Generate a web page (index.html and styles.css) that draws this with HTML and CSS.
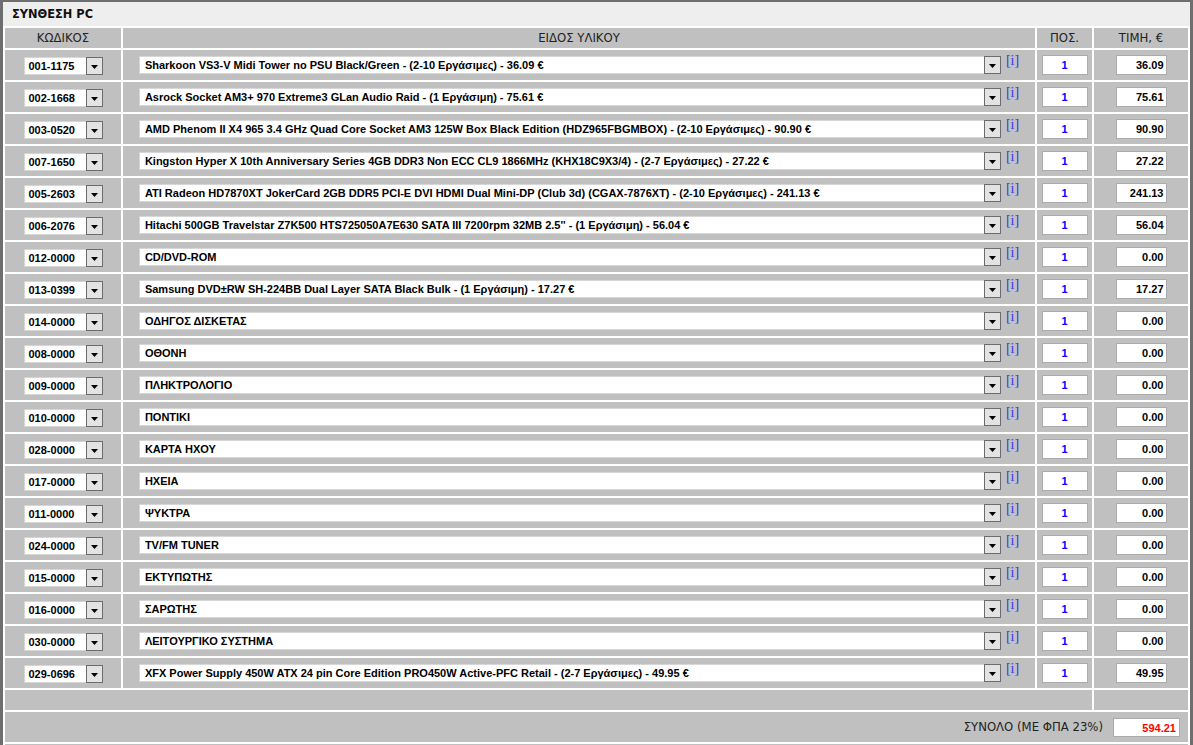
FILE: index.html
```html
<!DOCTYPE html>
<html>
<head>
<meta charset="utf-8">
<link rel="stylesheet" href="styles.css">
</head>
<body>
<div class="box">
  <div class="title">ΣΥΝΘΕΣΗ PC</div>
  <table class="grid">
    <thead>
      <tr class="head">
        <th class="c1">ΚΩΔΙΚΟΣ</th>
        <th class="c2">ΕΙΔΟΣ ΥΛΙΚΟΥ</th>
        <th class="c3">ΠΟΣ.</th>
        <th class="c4">ΤΙΜΗ, €</th>
      </tr>
    </thead>
    <tbody id="rows">
      <tr><td><div class="sel code"><span class="val">001-1175</span><span class="btn"><svg width="7" height="4" viewBox="0 0 7 4"><polygon points="0,0 7,0 3.5,4" fill="#000"/></svg></span></div></td><td><div class="item"><div class="sel desc"><span class="val">Sharkoon VS3-V Midi Tower no PSU Black/Green - (2-10 Εργάσιμες) - 36.09 €</span><span class="btn"><svg width="7" height="4" viewBox="0 0 7 4"><polygon points="0,0 7,0 3.5,4" fill="#000"/></svg></span></div><a class="info">[i]</a></div></td><td><div class="inp qty">1</div></td><td><div class="inp price">36.09</div></td></tr>
      <tr><td><div class="sel code"><span class="val">002-1668</span><span class="btn"><svg width="7" height="4" viewBox="0 0 7 4"><polygon points="0,0 7,0 3.5,4" fill="#000"/></svg></span></div></td><td><div class="item"><div class="sel desc"><span class="val">Asrock Socket AM3+ 970 Extreme3 GLan Audio Raid - (1 Εργάσιμη) - 75.61 €</span><span class="btn"><svg width="7" height="4" viewBox="0 0 7 4"><polygon points="0,0 7,0 3.5,4" fill="#000"/></svg></span></div><a class="info">[i]</a></div></td><td><div class="inp qty">1</div></td><td><div class="inp price">75.61</div></td></tr>
      <tr><td><div class="sel code"><span class="val">003-0520</span><span class="btn"><svg width="7" height="4" viewBox="0 0 7 4"><polygon points="0,0 7,0 3.5,4" fill="#000"/></svg></span></div></td><td><div class="item"><div class="sel desc"><span class="val">AMD Phenom II X4 965 3.4 GHz Quad Core Socket AM3 125W Box Black Edition (HDZ965FBGMBOX) - (2-10 Εργάσιμες) - 90.90 €</span><span class="btn"><svg width="7" height="4" viewBox="0 0 7 4"><polygon points="0,0 7,0 3.5,4" fill="#000"/></svg></span></div><a class="info">[i]</a></div></td><td><div class="inp qty">1</div></td><td><div class="inp price">90.90</div></td></tr>
      <tr><td><div class="sel code"><span class="val">007-1650</span><span class="btn"><svg width="7" height="4" viewBox="0 0 7 4"><polygon points="0,0 7,0 3.5,4" fill="#000"/></svg></span></div></td><td><div class="item"><div class="sel desc"><span class="val">Kingston Hyper X 10th Anniversary Series 4GB DDR3 Non ECC CL9 1866MHz (KHX18C9X3/4) - (2-7 Εργάσιμες) - 27.22 €</span><span class="btn"><svg width="7" height="4" viewBox="0 0 7 4"><polygon points="0,0 7,0 3.5,4" fill="#000"/></svg></span></div><a class="info">[i]</a></div></td><td><div class="inp qty">1</div></td><td><div class="inp price">27.22</div></td></tr>
      <tr><td><div class="sel code"><span class="val">005-2603</span><span class="btn"><svg width="7" height="4" viewBox="0 0 7 4"><polygon points="0,0 7,0 3.5,4" fill="#000"/></svg></span></div></td><td><div class="item"><div class="sel desc"><span class="val">ATI Radeon HD7870XT JokerCard 2GB DDR5 PCI-E DVI HDMI Dual Mini-DP (Club 3d) (CGAX-7876XT) - (2-10 Εργάσιμες) - 241.13 €</span><span class="btn"><svg width="7" height="4" viewBox="0 0 7 4"><polygon points="0,0 7,0 3.5,4" fill="#000"/></svg></span></div><a class="info">[i]</a></div></td><td><div class="inp qty">1</div></td><td><div class="inp price">241.13</div></td></tr>
      <tr><td><div class="sel code"><span class="val">006-2076</span><span class="btn"><svg width="7" height="4" viewBox="0 0 7 4"><polygon points="0,0 7,0 3.5,4" fill="#000"/></svg></span></div></td><td><div class="item"><div class="sel desc"><span class="val">Hitachi 500GB Travelstar Z7K500 HTS725050A7E630 SATA III 7200rpm 32MB 2.5'' - (1 Εργάσιμη) - 56.04 €</span><span class="btn"><svg width="7" height="4" viewBox="0 0 7 4"><polygon points="0,0 7,0 3.5,4" fill="#000"/></svg></span></div><a class="info">[i]</a></div></td><td><div class="inp qty">1</div></td><td><div class="inp price">56.04</div></td></tr>
      <tr><td><div class="sel code"><span class="val">012-0000</span><span class="btn"><svg width="7" height="4" viewBox="0 0 7 4"><polygon points="0,0 7,0 3.5,4" fill="#000"/></svg></span></div></td><td><div class="item"><div class="sel desc"><span class="val">CD/DVD-ROM</span><span class="btn"><svg width="7" height="4" viewBox="0 0 7 4"><polygon points="0,0 7,0 3.5,4" fill="#000"/></svg></span></div><a class="info">[i]</a></div></td><td><div class="inp qty">1</div></td><td><div class="inp price">0.00</div></td></tr>
      <tr><td><div class="sel code"><span class="val">013-0399</span><span class="btn"><svg width="7" height="4" viewBox="0 0 7 4"><polygon points="0,0 7,0 3.5,4" fill="#000"/></svg></span></div></td><td><div class="item"><div class="sel desc"><span class="val">Samsung DVD±RW SH-224BB Dual Layer SATA Black Bulk - (1 Εργάσιμη) - 17.27 €</span><span class="btn"><svg width="7" height="4" viewBox="0 0 7 4"><polygon points="0,0 7,0 3.5,4" fill="#000"/></svg></span></div><a class="info">[i]</a></div></td><td><div class="inp qty">1</div></td><td><div class="inp price">17.27</div></td></tr>
      <tr><td><div class="sel code"><span class="val">014-0000</span><span class="btn"><svg width="7" height="4" viewBox="0 0 7 4"><polygon points="0,0 7,0 3.5,4" fill="#000"/></svg></span></div></td><td><div class="item"><div class="sel desc"><span class="val">ΟΔΗΓΟΣ ΔΙΣΚΕΤΑΣ</span><span class="btn"><svg width="7" height="4" viewBox="0 0 7 4"><polygon points="0,0 7,0 3.5,4" fill="#000"/></svg></span></div><a class="info">[i]</a></div></td><td><div class="inp qty">1</div></td><td><div class="inp price">0.00</div></td></tr>
      <tr><td><div class="sel code"><span class="val">008-0000</span><span class="btn"><svg width="7" height="4" viewBox="0 0 7 4"><polygon points="0,0 7,0 3.5,4" fill="#000"/></svg></span></div></td><td><div class="item"><div class="sel desc"><span class="val">ΟΘΟΝΗ</span><span class="btn"><svg width="7" height="4" viewBox="0 0 7 4"><polygon points="0,0 7,0 3.5,4" fill="#000"/></svg></span></div><a class="info">[i]</a></div></td><td><div class="inp qty">1</div></td><td><div class="inp price">0.00</div></td></tr>
      <tr><td><div class="sel code"><span class="val">009-0000</span><span class="btn"><svg width="7" height="4" viewBox="0 0 7 4"><polygon points="0,0 7,0 3.5,4" fill="#000"/></svg></span></div></td><td><div class="item"><div class="sel desc"><span class="val">ΠΛΗΚΤΡΟΛΟΓΙΟ</span><span class="btn"><svg width="7" height="4" viewBox="0 0 7 4"><polygon points="0,0 7,0 3.5,4" fill="#000"/></svg></span></div><a class="info">[i]</a></div></td><td><div class="inp qty">1</div></td><td><div class="inp price">0.00</div></td></tr>
      <tr><td><div class="sel code"><span class="val">010-0000</span><span class="btn"><svg width="7" height="4" viewBox="0 0 7 4"><polygon points="0,0 7,0 3.5,4" fill="#000"/></svg></span></div></td><td><div class="item"><div class="sel desc"><span class="val">ΠΟΝΤΙΚΙ</span><span class="btn"><svg width="7" height="4" viewBox="0 0 7 4"><polygon points="0,0 7,0 3.5,4" fill="#000"/></svg></span></div><a class="info">[i]</a></div></td><td><div class="inp qty">1</div></td><td><div class="inp price">0.00</div></td></tr>
      <tr><td><div class="sel code"><span class="val">028-0000</span><span class="btn"><svg width="7" height="4" viewBox="0 0 7 4"><polygon points="0,0 7,0 3.5,4" fill="#000"/></svg></span></div></td><td><div class="item"><div class="sel desc"><span class="val">ΚΑΡΤΑ ΗΧΟΥ</span><span class="btn"><svg width="7" height="4" viewBox="0 0 7 4"><polygon points="0,0 7,0 3.5,4" fill="#000"/></svg></span></div><a class="info">[i]</a></div></td><td><div class="inp qty">1</div></td><td><div class="inp price">0.00</div></td></tr>
      <tr><td><div class="sel code"><span class="val">017-0000</span><span class="btn"><svg width="7" height="4" viewBox="0 0 7 4"><polygon points="0,0 7,0 3.5,4" fill="#000"/></svg></span></div></td><td><div class="item"><div class="sel desc"><span class="val">ΗΧΕΙΑ</span><span class="btn"><svg width="7" height="4" viewBox="0 0 7 4"><polygon points="0,0 7,0 3.5,4" fill="#000"/></svg></span></div><a class="info">[i]</a></div></td><td><div class="inp qty">1</div></td><td><div class="inp price">0.00</div></td></tr>
      <tr><td><div class="sel code"><span class="val">011-0000</span><span class="btn"><svg width="7" height="4" viewBox="0 0 7 4"><polygon points="0,0 7,0 3.5,4" fill="#000"/></svg></span></div></td><td><div class="item"><div class="sel desc"><span class="val">ΨΥΚΤΡΑ</span><span class="btn"><svg width="7" height="4" viewBox="0 0 7 4"><polygon points="0,0 7,0 3.5,4" fill="#000"/></svg></span></div><a class="info">[i]</a></div></td><td><div class="inp qty">1</div></td><td><div class="inp price">0.00</div></td></tr>
      <tr><td><div class="sel code"><span class="val">024-0000</span><span class="btn"><svg width="7" height="4" viewBox="0 0 7 4"><polygon points="0,0 7,0 3.5,4" fill="#000"/></svg></span></div></td><td><div class="item"><div class="sel desc"><span class="val">TV/FM TUNER</span><span class="btn"><svg width="7" height="4" viewBox="0 0 7 4"><polygon points="0,0 7,0 3.5,4" fill="#000"/></svg></span></div><a class="info">[i]</a></div></td><td><div class="inp qty">1</div></td><td><div class="inp price">0.00</div></td></tr>
      <tr><td><div class="sel code"><span class="val">015-0000</span><span class="btn"><svg width="7" height="4" viewBox="0 0 7 4"><polygon points="0,0 7,0 3.5,4" fill="#000"/></svg></span></div></td><td><div class="item"><div class="sel desc"><span class="val">ΕΚΤΥΠΩΤΗΣ</span><span class="btn"><svg width="7" height="4" viewBox="0 0 7 4"><polygon points="0,0 7,0 3.5,4" fill="#000"/></svg></span></div><a class="info">[i]</a></div></td><td><div class="inp qty">1</div></td><td><div class="inp price">0.00</div></td></tr>
      <tr><td><div class="sel code"><span class="val">016-0000</span><span class="btn"><svg width="7" height="4" viewBox="0 0 7 4"><polygon points="0,0 7,0 3.5,4" fill="#000"/></svg></span></div></td><td><div class="item"><div class="sel desc"><span class="val">ΣΑΡΩΤΗΣ</span><span class="btn"><svg width="7" height="4" viewBox="0 0 7 4"><polygon points="0,0 7,0 3.5,4" fill="#000"/></svg></span></div><a class="info">[i]</a></div></td><td><div class="inp qty">1</div></td><td><div class="inp price">0.00</div></td></tr>
      <tr><td><div class="sel code"><span class="val">030-0000</span><span class="btn"><svg width="7" height="4" viewBox="0 0 7 4"><polygon points="0,0 7,0 3.5,4" fill="#000"/></svg></span></div></td><td><div class="item"><div class="sel desc"><span class="val">ΛΕΙΤΟΥΡΓΙΚΟ ΣΥΣΤΗΜΑ</span><span class="btn"><svg width="7" height="4" viewBox="0 0 7 4"><polygon points="0,0 7,0 3.5,4" fill="#000"/></svg></span></div><a class="info">[i]</a></div></td><td><div class="inp qty">1</div></td><td><div class="inp price">0.00</div></td></tr>
      <tr><td><div class="sel code"><span class="val">029-0696</span><span class="btn"><svg width="7" height="4" viewBox="0 0 7 4"><polygon points="0,0 7,0 3.5,4" fill="#000"/></svg></span></div></td><td><div class="item"><div class="sel desc"><span class="val">XFX Power Supply 450W ATX 24 pin Core Edition PRO450W Active-PFC Retail - (2-7 Εργάσιμες) - 49.95 €</span><span class="btn"><svg width="7" height="4" viewBox="0 0 7 4"><polygon points="0,0 7,0 3.5,4" fill="#000"/></svg></span></div><a class="info">[i]</a></div></td><td><div class="inp qty">1</div></td><td><div class="inp price">49.95</div></td></tr>
    </tbody>
    <tfoot>
      <tr class="blank"><td colspan="3"></td><td></td></tr>
      <tr class="total"><td colspan="4"><div class="sum"><span class="label">ΣΥΝΟΛΟ (ΜΕ ΦΠΑ 23%)</span><div class="inp grand">594.21</div></div></td></tr>
      <tr class="rest"><td colspan="4"></td></tr>
    </tfoot>
  </table>
</div>
</body>
</html>
```

FILE: styles.css
```css
html, body {
  margin: 0;
  padding: 0;
  background: #ffffff;
  overflow: hidden;
}

.box {
  width: 1193px;
  box-sizing: border-box;
  border-top: 2px solid #6e6e6e;
  border-left: 3px solid #6e6e6e;
  border-right: 3px solid #6e6e6e;
  background: #ffffff;
}

.title {
  height: 24px;
  line-height: 24px;
  background: #eeeeee;
  padding-left: 9px;
  font-family: "DejaVu Sans", Verdana, sans-serif;
  font-weight: bold;
  font-size: 11.4px;
  color: #111111;
}

.grid {
  width: 1187px;
  border-collapse: separate;
  border-spacing: 2px;
  table-layout: fixed;
  background: #ffffff;
}

.grid td, .grid th {
  background: #c0c0c0;
  padding: 0;
}

.c1 { width: 116px; }
.c2 { width: 912px; }
.c3 { width: 55px; }
.c4 { width: 94px; }

.head th {
  height: 20px;
  font-family: "DejaVu Sans", Verdana, sans-serif;
  font-weight: normal;
  font-size: 11.7px;
  color: #222222;
  text-align: center;
}

tbody td {
  height: 30px;
  text-align: center;
  vertical-align: middle;
}

.sel {
  display: inline-flex;
  align-items: stretch;
  height: 18px;
  box-sizing: border-box;
  background: #ffffff;
  border: 1px solid #d6d6d6;
  font-family: "Liberation Sans", Arial, sans-serif;
  font-weight: bold;
  font-size: 11px;
  color: #000000;
  text-align: left;
  vertical-align: middle;
}

.sel .val {
  flex: 1;
  line-height: 17px;
  white-space: nowrap;
  overflow: hidden;
}

.code { width: 79px; }
.code .val { padding-left: 4px; }

.desc { width: 862px; }
.desc .val { padding-left: 5px; }

.btn {
  width: 17px;
  flex: none;
  box-sizing: border-box;
  border: 1px solid #6c6c6c;
  background: #e3e3e3;
  margin: -1px -1px -1px 0;
  height: 18px;
  display: flex;
  align-items: center;
  justify-content: center;
  padding-top: 2px;
}

.btn svg { display: block; }

.item {
  display: flex;
  justify-content: center;
  align-items: flex-start;
}

.info {
  margin-left: 5px;
  margin-top: -2px;
  font-family: "Liberation Serif", "Times New Roman", serif;
  font-size: 14px;
  line-height: 14px;
  color: #3535f0;
  cursor: pointer;
}

.inp {
  display: inline-block;
  box-sizing: border-box;
  height: 20px;
  line-height: 19px;
  background: #ffffff;
  border: 1px solid #ababab;
  font-family: "Liberation Sans", Arial, sans-serif;
  font-weight: bold;
  font-size: 11px;
  vertical-align: middle;
}

.qty {
  width: 46px;
  text-align: center;
  color: #0000ff;
}

.price {
  width: 51px;
  text-align: right;
  padding-right: 2px;
  color: #000000;
}

.blank td { height: 20px; }

.total td { height: 30px; }

.sum {
  display: flex;
  justify-content: flex-end;
  align-items: center;
  padding-right: 8px;
  gap: 10px;
}

.label {
  font-family: "DejaVu Sans", Verdana, sans-serif;
  font-size: 11.7px;
  color: #222222;
}

.grand {
  width: 67px;
  height: 19px;
  line-height: 18px;
  text-align: right;
  padding-right: 3px;
  color: #ff0000;
}

.rest td { height: 20px; }
```
